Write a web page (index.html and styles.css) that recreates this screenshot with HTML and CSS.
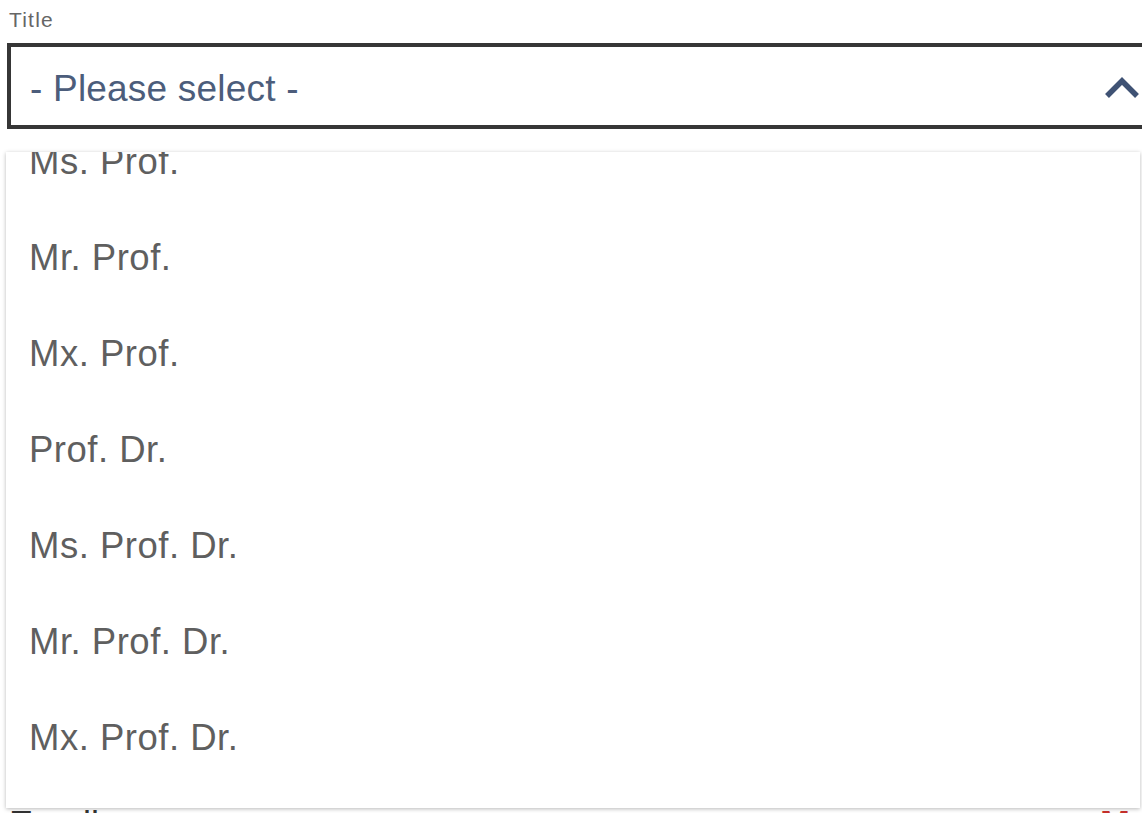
FILE: index.html
```html
<!DOCTYPE html>
<html lang="en">
<head>
<meta charset="utf-8">
<title>Title select</title>
<link rel="stylesheet" href="styles.css">
</head>
<body>
<form class="form">
  <div class="field">
    <label class="label">Title</label>
    <div class="select-wrap">
      <div class="select">
        <span class="select-value">- Please select -</span>
        <svg class="chevron" width="36" height="22" viewBox="0 0 36 22" aria-hidden="true">
          <polyline points="3,19 18,4 33,19" fill="none" stroke="currentColor" stroke-width="5.5" stroke-linejoin="miter"/>
        </svg>
      </div>
      <div class="options">
        <ul class="options-list">
          <li class="option">Ms. Prof.</li>
          <li class="option">Mr. Prof.</li>
          <li class="option">Mx. Prof.</li>
          <li class="option">Prof. Dr.</li>
          <li class="option">Ms. Prof. Dr.</li>
          <li class="option">Mr. Prof. Dr.</li>
          <li class="option">Mx. Prof. Dr.</li>
        </ul>
      </div>
    </div>
  </div>
  <div class="field-row">
    <label class="label-big">Email</label>
    <span class="required">Mandatory</span>
  </div>
</form>
</body>
</html>
```
FILE: styles.css
```css
html, body {
  margin: 0;
  padding: 0;
  background: #ffffff;
  overflow: hidden;
}
body {
  font-family: "Liberation Sans", Arial, sans-serif;
  width: 1142px;
  height: 813px;
}
.form {
  padding: 8px 0 0 7px;
  width: 1170px;
}
.field {
  display: flex;
  flex-direction: column;
}
.label {
  font-size: 21px;
  line-height: 24px;
  color: #666666;
  padding-left: 2px;
  letter-spacing: 1.2px;
}
.select-wrap {
  position: relative;
  margin-top: 11px;
}
.select {
  box-sizing: border-box;
  height: 86px;
  width: 1162px;
  border: 4px solid #363636;
  display: flex;
  align-items: center;
  justify-content: space-between;
  padding: 6px 25px 0 19px;
  background: #fff;
}
.select-value {
  font-size: 37px;
  color: #4c5d7b;
  letter-spacing: 0.2px;
}
.chevron {
  color: #3f5274;
  margin-top: -2px;
}
.options {
  position: absolute;
  top: 109px;
  left: -1px;
  width: 1134px;
  height: 656px;
  background: #fff;
  box-shadow: 0 1px 4px rgba(0, 0, 0, 0.28);
  overflow: hidden;
  z-index: 2;
}
.options-list {
  list-style: none;
  margin: -38px 0 0 0;
  padding: 0;
}
.option {
  height: 96px;
  display: flex;
  align-items: center;
  padding-left: 23px;
  font-size: 36.5px;
  letter-spacing: 0.5px;
  color: #5f5f5f;
}
.field-row {
  display: grid;
  grid-template-columns: 1093px auto;
  margin-top: 678px;
  font-size: 36px;
  line-height: 36px;
}
.label-big {
  color: #333333;
  padding-left: 2px;
}
.required {
  color: #c8302c;
  font-weight: bold;
}
```
